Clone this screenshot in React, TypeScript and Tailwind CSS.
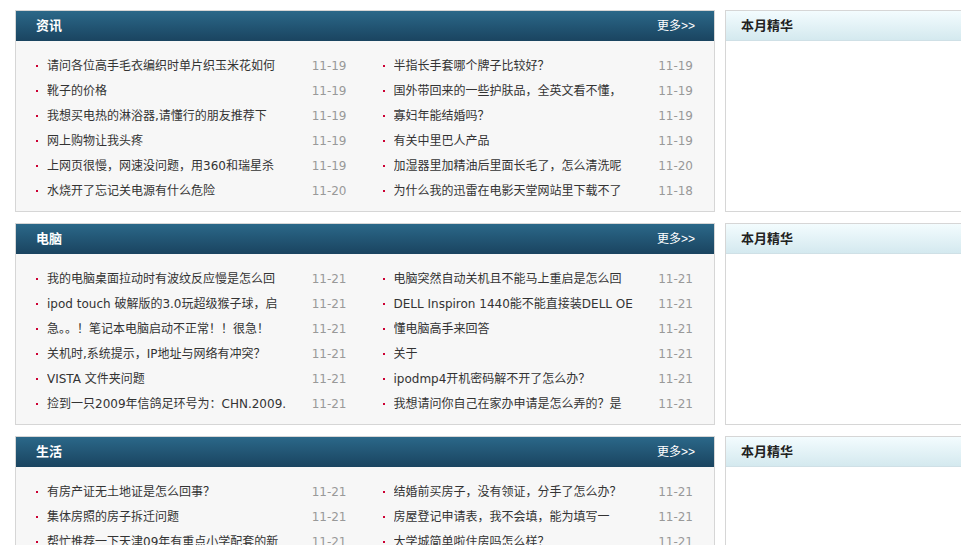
import * as React from "react"

type Item = { title: string; date: string }

type Section = { name: string; left: Item[]; right: Item[] }

const SECTIONS: Section[] = [
  {
    name: "资讯",
    left: [
      { title: "请问各位高手毛衣编织时单片织玉米花如何", date: "11-19" },
      { title: "靴子的价格", date: "11-19" },
      { title: "我想买电热的淋浴器,请懂行的朋友推荐下", date: "11-19" },
      { title: "网上购物让我头疼", date: "11-19" },
      { title: "上网页很慢，网速没问题，用360和瑞星杀", date: "11-19" },
      { title: "水烧开了忘记关电源有什么危险", date: "11-20" },
    ],
    right: [
      { title: "半指长手套哪个牌子比较好？", date: "11-19" },
      { title: "国外带回来的一些护肤品，全英文看不懂，", date: "11-19" },
      { title: "寡妇年能结婚吗？", date: "11-19" },
      { title: "有关中里巴人产品", date: "11-19" },
      { title: "加湿器里加精油后里面长毛了，怎么清洗呢", date: "11-20" },
      { title: "为什么我的迅雷在电影天堂网站里下载不了", date: "11-18" },
    ],
  },
  {
    name: "电脑",
    left: [
      { title: "我的电脑桌面拉动时有波纹反应慢是怎么回", date: "11-21" },
      { title: "ipod touch 破解版的3.0玩超级猴子球，启", date: "11-21" },
      { title: "急。。！笔记本电脑启动不正常！！很急！", date: "11-21" },
      { title: "关机时,系统提示，IP地址与网络有冲突？", date: "11-21" },
      { title: "VISTA 文件夹问题", date: "11-21" },
      { title: "捡到一只2009年信鸽足环号为：CHN.2009.", date: "11-21" },
    ],
    right: [
      { title: "电脑突然自动关机且不能马上重启是怎么回", date: "11-21" },
      { title: "DELL Inspiron 1440能不能直接装DELL OE", date: "11-21" },
      { title: "懂电脑高手来回答", date: "11-21" },
      { title: "关于", date: "11-21" },
      { title: "ipodmp4开机密码解不开了怎么办？", date: "11-21" },
      { title: "我想请问你自己在家办申请是怎么弄的？是", date: "11-21" },
    ],
  },
  {
    name: "生活",
    left: [
      { title: "有房产证无土地证是怎么回事？", date: "11-21" },
      { title: "集体房照的房子拆迁问题", date: "11-21" },
      { title: "帮忙推荐一下天津09年有重点小学配套的新", date: "11-21" },
      { title: "二手房交易税费问题", date: "11-21" },
      { title: "装修后多久可以入住", date: "11-21" },
      { title: "租房合同到期房东不退押金", date: "11-21" },
    ],
    right: [
      { title: "结婚前买房子，没有领证，分手了怎么办？", date: "11-21" },
      { title: "房屋登记申请表，我不会填，能为填写一", date: "11-21" },
      { title: "大学城简单啦住房吗怎么样？", date: "11-21" },
      { title: "公积金贷款需要什么手续", date: "11-21" },
      { title: "物业费应该怎么收取", date: "11-21" },
      { title: "小区停车位归谁所有", date: "11-21" },
    ],
  },
]

const FONT = "font-['DejaVu_Sans','Noto_Sans_CJK_SC',sans-serif]"

function NewsRow({ item }: { item: Item }) {
  return (
    <li className="flex h-[25px] items-center">
      <span className="mr-[9px] h-[2px] w-[2px] shrink-0 bg-[#cc0033]" />
      <span className="w-[253px] overflow-hidden whitespace-nowrap text-[12px] text-[#333]">
        {item.title}
      </span>
      <span className="ml-auto pr-[1px] text-[12px] text-[#999]">{item.date}</span>
    </li>
  )
}

function SectionBlock({ section }: { section: Section }) {
  return (
    <div className="flex gap-[10px]">
      {/* Left: news list */}
      <div className="w-[700px] shrink-0 border border-[#d6d6d6] bg-[#f7f7f7]">
        <div className="flex h-[30px] items-center justify-between bg-gradient-to-b from-[#2b6889] to-[#1a4460] pl-[20px] pr-[19px]">
          <span className="text-[13px] font-bold text-white">{section.name}</span>
          <span className="font-['Liberation_Sans','Noto_Sans_CJK_SC',sans-serif] text-[12px] text-white">
            更多&gt;&gt;
          </span>
        </div>
        <div className="grid grid-cols-2 gap-x-[35px] px-[20px] pb-[8px] pt-[12px]">
          <ul>
            {section.left.map((item, i) => (
              <NewsRow key={i} item={item} />
            ))}
          </ul>
          <ul>
            {section.right.map((item, i) => (
              <NewsRow key={i} item={item} />
            ))}
          </ul>
        </div>
      </div>

      {/* Right: monthly picks */}
      <div className="w-[250px] shrink-0 border border-[#d6d6d6] bg-white">
        <div className="flex h-[30px] items-center border-b border-[#cfe0e6] bg-gradient-to-b from-[#f3fcfe] to-[#d4e9ef] pl-[15px]">
          <span className="text-[13px] font-bold text-[#222]">本月精华</span>
        </div>
      </div>
    </div>
  )
}

export default function App() {
  return (
    <div className={`h-[545px] w-[961px] overflow-hidden bg-white pl-[15px] pt-[10px] ${FONT}`}>
      <div className="flex flex-col gap-[11px]">
        {SECTIONS.map((s) => (
          <SectionBlock key={s.name} section={s} />
        ))}
      </div>
    </div>
  )
}
